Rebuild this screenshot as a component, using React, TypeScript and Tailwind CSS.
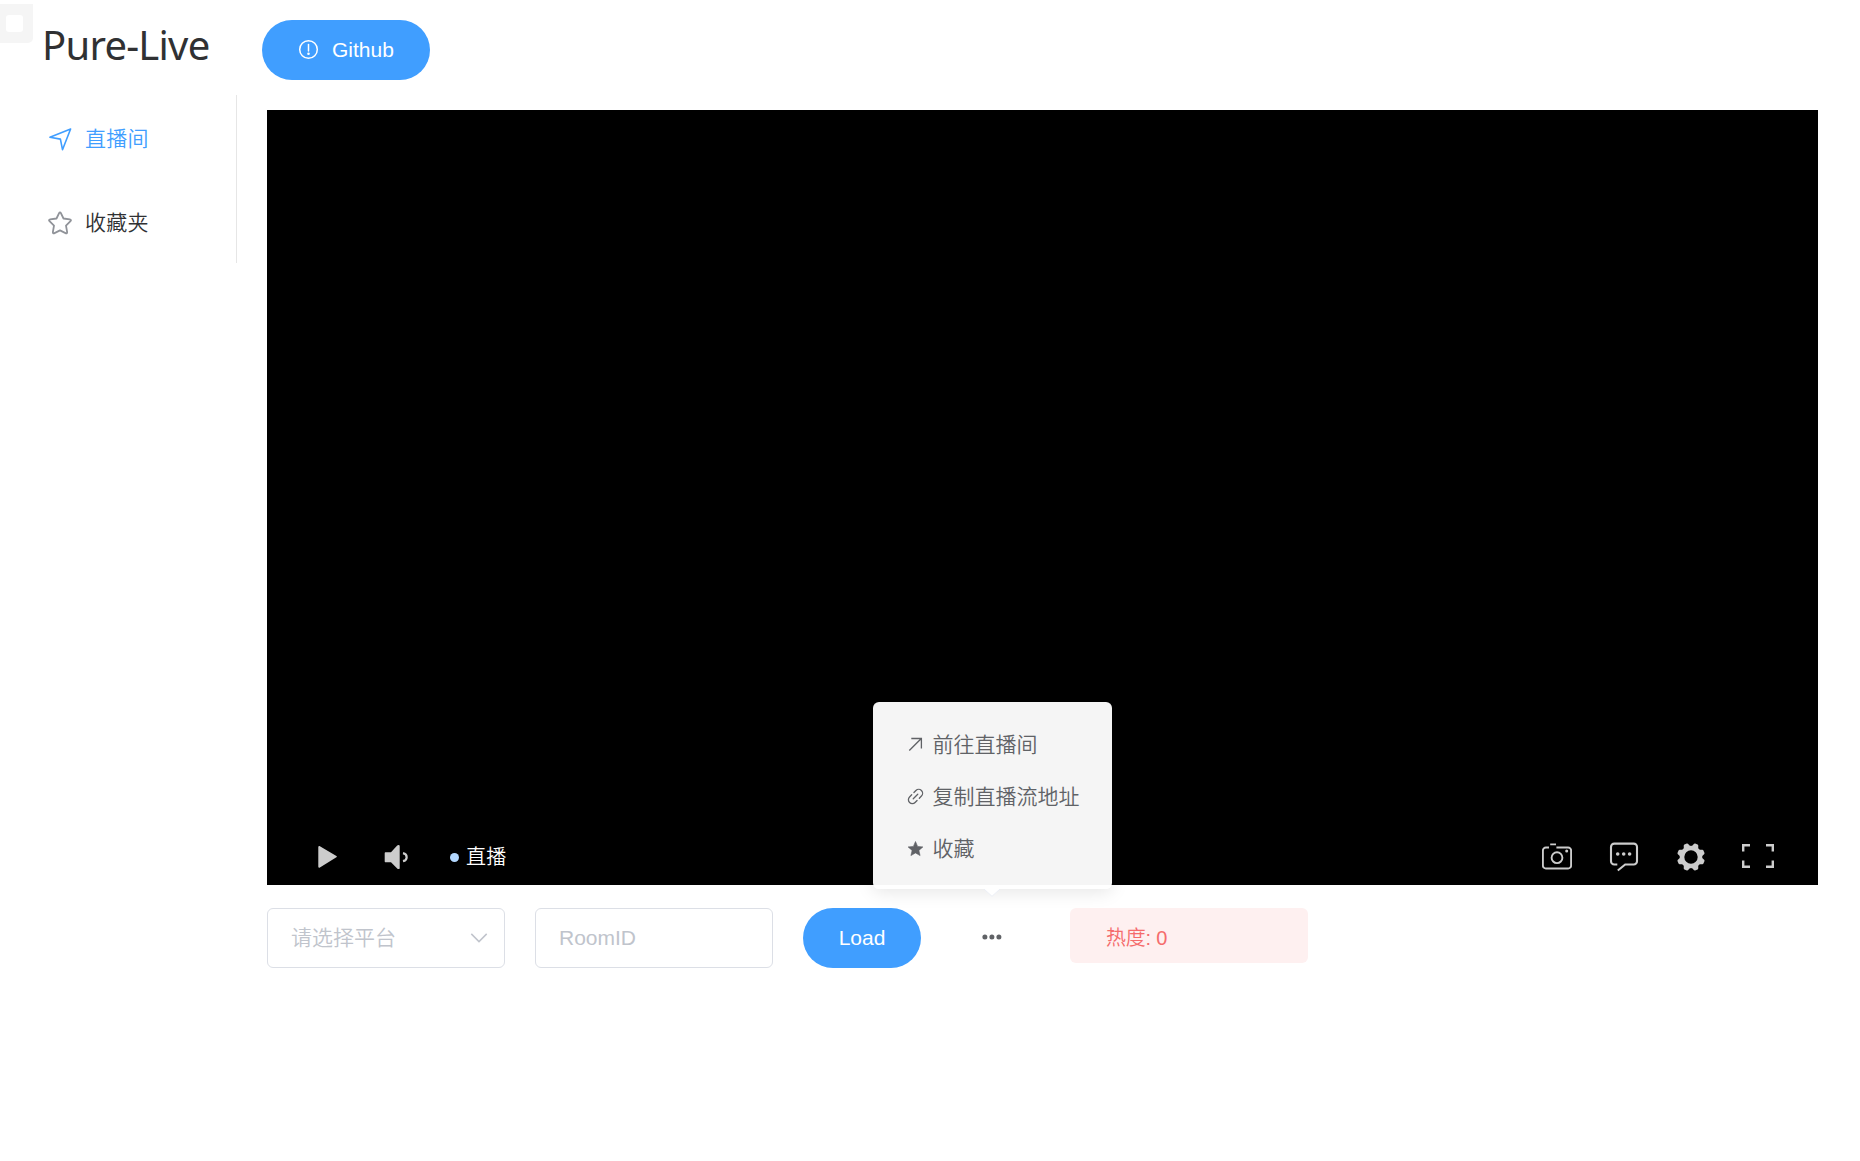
import type { ReactNode } from "react";

function Header() {
  return (
    <header className="relative flex h-[95px] items-start pl-[41px] pt-5">
      <div className="absolute left-0 top-1 h-[39px] w-[33px] rounded-br-[5px] bg-[#f5f5f5] pl-[6px] pt-[11px]">
        <div className="h-[17px] w-[17px] rounded-[3px] bg-white" />
      </div>
      <h1 className='-mt-[2px] h-[54px] w-[221px] whitespace-nowrap pl-px font-["Noto_Sans",sans-serif] text-[40px] font-normal leading-[54px] tracking-[-0.75px] text-[#303133]'>
        Pure-Live
      </h1>
      <button className="flex h-[60px] w-[168px] items-center rounded-full bg-[#409eff] pl-[36px] text-[21px] text-white">
        <svg className="-mt-px" width="21" height="21" viewBox="0 0 21 21" fill="none" stroke="currentColor" strokeWidth="1.5">
          <circle cx="10.5" cy="10.5" r="8.8" />
          <path d="M10.5 5.5v6.6" strokeLinecap="round" />
          <circle cx="10.5" cy="14.8" r="1.3" fill="currentColor" stroke="none" />
        </svg>
        <span className="ml-[13px]">Github</span>
      </button>
    </header>
  );
}

function NavItem({ icon, label, active }: { icon: ReactNode; label: string; active?: boolean }) {
  return (
    <li className={`flex h-[84px] items-center pl-[48px] pt-[3px] ${active ? "text-[#409eff]" : "text-[#303133]"}`}>
      {icon}
      <span className="ml-[13px] pt-px text-[21px] leading-[30px] tracking-[0.2px]">{label}</span>
    </li>
  );
}

function Sidebar() {
  return (
    <nav className="h-[168px] w-[237px] border-r border-[#e6e6e6]">
      <ul>
        <NavItem
          active
          label="直播间"
          icon={
            <svg width="24" height="24" viewBox="0 0 24 24" fill="none" stroke="#409eff" strokeWidth="1.6" strokeLinejoin="round">
              <path d="M22.6 2 1.9 10.2l10.5 1.9 2.1 10.6Z" />
            </svg>
          }
        />
        <NavItem
          label="收藏夹"
          icon={
            <svg width="24" height="24" viewBox="0 0 24 24" fill="none" stroke="#909399" strokeWidth="1.8" strokeLinejoin="round">
              <path d="M12 1.3c.5 0 .7.4.9.8l2.6 5.4 6.3.9c1.2.2 1.5 1 .7 1.8L18 14.6l1.1 6.3c.2 1.3-.5 1.8-1.6 1.2L12 19.4l-5.5 2.7c-1.1.6-1.8.1-1.6-1.2L6 14.6 1.5 10.2c-.8-.8-.5-1.6.7-1.8l6.3-.9L11.1 2.100c.2-.4.4-.8.9-.8Z" />
            </svg>
          }
        />
      </ul>
    </nav>
  );
}

function GearIcon() {
  return (
    <svg className="ml-[38px]" width="28" height="28" viewBox="-14 -14 28 28">
      <circle r="9" fill="none" stroke="currentColor" strokeWidth="4.6" />
      <g fill="currentColor">
        {[22.5, 67.5, 112.5, 157.5, 202.5, 247.5, 292.5, 337.5].map((angle) => (
          <path key={angle} transform={`rotate(${angle})`} d="M-3.6-10-2.4-13.200Q-2.100-14-1.300-14H1.300Q2.100-14 2.400-13.200L3.600-10Z" />
        ))}
      </g>
    </svg>
  );
}

function PlayerControls() {
  return (
    <div className="flex h-[56px] w-full items-center text-[#cccccc]">
      <svg className="ml-[50px]" width="22" height="24" viewBox="0 0 22 24" fill="currentColor">
        <path d="M1.3 2c0-.9.8-1.2 1.6-.8L19.400 11c.6.400.6.900 0 1.300L2.900 22.600c-.8.400-1.600.100-1.600-.8Z" />
      </svg>
      <svg className="ml-[44px]" width="26" height="26" viewBox="0 0 26 26" fill="currentColor">
        <path d="M2.700 8.300H8L14.200 1.600c.9-.9 2.500-.8 2.500.6v21.700c0 1.300-1.600 1.600-2.500.6L8 18.300H2.700c-.6 0-1-.4-1-1v-8c0-.6.400-1 1-1Z" />
        <path d="M20 9.200c4.900 1 4.900 7 0 8" fill="none" stroke="currentColor" strokeWidth="2.200" />
      </svg>
      <span className="ml-[41px] h-[9px] w-[9px] rounded-full bg-[#b3d8ff]" />
      <span className="ml-[7px] text-[20px] leading-7 tracking-[0.3px] text-white">直播</span>
      <div className="ml-auto flex items-center pr-[43px]">
        <svg width="30" height="30" viewBox="0 0 30 30" fill="none" stroke="currentColor" strokeWidth="1.900">
          <path d="M7 5.500H3.900A3 3 0 0 0 .9 8.500v15a3 3 0 0 0 3 3h22.200a3 3 0 0 0 3-3v-15a3 3 0 0 0-3-3H14.400M8.200 2.400h5.800" />
          <circle cx="15" cy="15.700" r="5.400" />
          <circle cx="24.700" cy="9" r="1.500" fill="currentColor" stroke="none" />
        </svg>
        <svg className="ml-[37px]" width="30" height="30" viewBox="0 0 30 30" fill="none" stroke="currentColor" strokeWidth="2.100">
          <path d="M8.300 22.500H5.300A3.300 3.300 0 0 1 2 19.200V4.900A3.300 3.300 0 0 1 5.300 1.600h19.400A3.300 3.300 0 0 1 28 4.900v14.300a3.300 3.300 0 0 1-3.300 3.300H16.200L8.800 28.500" />
          <g fill="currentColor" stroke="none">
            <circle cx="8.700" cy="12" r="1.800" />
            <circle cx="14.700" cy="12" r="1.800" />
            <circle cx="20.600" cy="12" r="1.800" />
          </g>
        </svg>
        <GearIcon />
        <svg className="-mt-[2px] ml-[36px]" width="34" height="26" viewBox="0 0 34 26" fill="none" stroke="currentColor" strokeWidth="2.400">
          <path d="M2.200 8.500V2.200H9M25 2.200h6.800v6.300M31.800 17.500v6.300H25M9 23.800H2.200v-6.300" />
        </svg>
      </div>
    </div>
  );
}

function MenuItem({ icon, label }: { icon: ReactNode; label: string }) {
  return (
    <li className="flex h-[52px] items-center">
      {icon}
      <span className="ml-[9px] text-[21px] leading-[30px]">{label}</span>
    </li>
  );
}

function MoreMenu() {
  return (
    <div className="absolute bottom-[76px] left-[-50px] h-[187px] w-[239px] rounded-[6px] bg-white/96 pl-[34px] pt-[17px] shadow-[0_3px_18px_rgba(0,0,0,0.1)]">
      <ul className="-ml-[0.5px] text-[#606266]">
        <MenuItem
          label="前往直播间"
          icon={
            <svg className="-mt-[2px]" width="17" height="17" viewBox="0 0 17 17" fill="none" stroke="currentColor" strokeWidth="1.300">
              <path d="M2.300 14.500 14.300 2.500M4.300 2.500h10.100v10.100" />
            </svg>
          }
        />
        <MenuItem
          label="复制直播流地址"
          icon={
            <svg className="-mt-[2px]" width="17" height="17" viewBox="0 0 17 17" fill="none" stroke="currentColor" strokeWidth="1.300" strokeLinecap="round">
              <g transform="rotate(-45 8.500 8.500)">
                <path d="M10.200 4.600H13a3.900 3.900 0 0 1 0 7.800H10M6.800 12.400H4a3.900 3.900 0 0 1 0-7.800h3M5.300 8.500h6.400" />
              </g>
            </svg>
          }
        />
        <MenuItem
          label="收藏"
          icon={
            <svg className="-mt-px" width="17" height="17" viewBox="0 0 17 17" fill="currentColor" stroke="currentColor" strokeWidth=".6" strokeLinejoin="round">
              <path d="m8.500 1.500 2.100 4.900 5.300.5-4 3.500 1.200 5.200-4.600-2.700-4.600 2.700 1.200-5.200-4-3.500 5.300-.5Z" />
            </svg>
          }
        />
      </ul>
      <svg className="absolute left-[111px] top-[187px]" width="16" height="8" viewBox="0 0 16 8">
        <path d="M0 0h16L8 7.500Z" fill="white" />
        <path d="M0 0 8 7.300 16 0" fill="none" stroke="#ebeef5" />
      </svg>
    </div>
  );
}

function Toolbar() {
  return (
    <div className="mt-[23px] flex items-start">
      <div className="flex h-[60px] w-[238px] items-center justify-between rounded-[6px] border border-[#dcdfe6] pl-[23px] pr-[16px] text-[21px] text-[#c0c4cc]">
        <span>请选择平台</span>
        <svg width="18" height="12" viewBox="0 0 18 12" fill="none" stroke="currentColor" strokeWidth="1.500">
          <path d="m1.300 1.900 7.700 7.700 7.700-7.700" />
        </svg>
      </div>
      <input
        placeholder="RoomID"
        className="ml-[30px] h-[60px] w-[238px] rounded-[6px] border border-[#dcdfe6] px-[23px] text-[21px] outline-none placeholder:text-[#c0c4cc]"
      />
      <button className="ml-[30px] h-[60px] w-[118px] rounded-full bg-[#409eff] text-[21px] text-white">Load</button>
      <div className="relative ml-[2px] flex h-[57px] w-[137px] items-center justify-center text-[#606266]">
        <svg width="20" height="6" viewBox="0 0 20 6" fill="currentColor">
          <circle cx="2.900" cy="3" r="2.500" />
          <circle cx="9.900" cy="3" r="2.500" />
          <circle cx="16.900" cy="3" r="2.500" />
        </svg>
        <MoreMenu />
      </div>
      <div className="ml-[10px] flex h-[55px] w-[238px] items-center rounded-[6px] bg-[#fef0f0] pl-[36px] pt-[5px] text-[20px] tracking-[-0.2px] text-[#f56c6c]">
        热度: 0
      </div>
    </div>
  );
}

export default function App() {
  return (
    <div className='h-[1161px] w-[1860px] overflow-hidden bg-white font-["Liberation_Sans","Noto_Sans_CJK_SC",sans-serif] font-[350]'>
      <Header />
      <div className="flex">
        <Sidebar />
        <main className="ml-[30px] w-[1551px] pt-[15px]">
          <section className="flex h-[775px] items-end bg-black">
            <PlayerControls />
          </section>
          <Toolbar />
        </main>
      </div>
    </div>
  );
}
